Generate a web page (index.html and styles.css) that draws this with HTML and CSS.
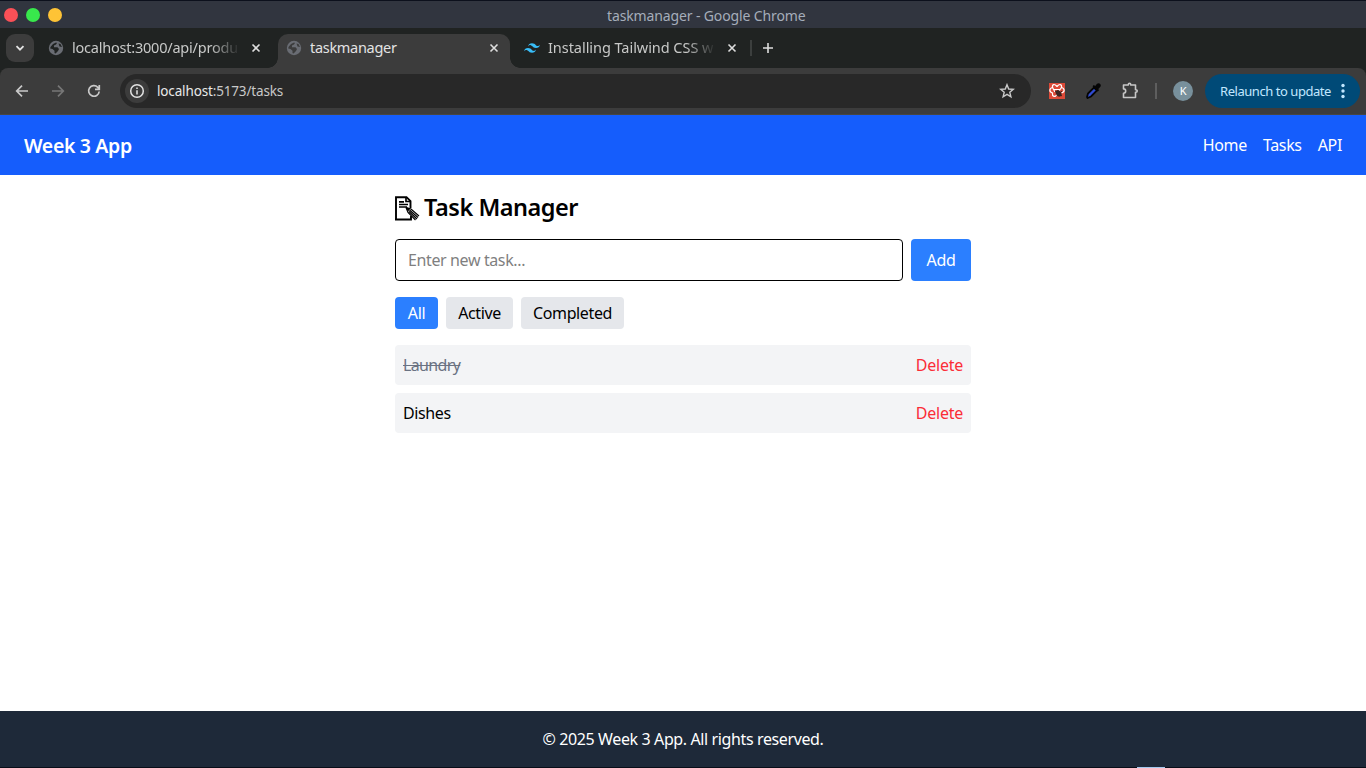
FILE: index.html
```html
<!DOCTYPE html>
<html lang="en">
<head>
<meta charset="utf-8">
<title>taskmanager</title>
<link rel="stylesheet" href="styles.css">
</head>
<body>
<div class="desktop-edge"></div>
<header class="titlebar">
  <div class="lights"><i class="light red"></i><i class="light green"></i><i class="light yellow"></i></div>
  <span class="window-title">taskmanager - Google Chrome</span>
</header>
<div class="tabstrip">
  <div class="tab-search"><svg width="12" height="12" viewBox="0 0 12 12"><path d="M2.500 4.200 6 7.700l3.500-3.500" fill="none" stroke="#e3e3e3" stroke-width="1.800"/></svg></div>
  <div class="tab">
    <svg class="globe" viewBox="0 0 16 16"><circle cx="8" cy="8" r="7.200" fill="#696c73"/><path d="M2.500 7 5 4 8 2.400l1 .6-1 1.500-2 1v1.800h3.500L11 9l-1 2-2.500 2.500-1-.5v-2.300L4.500 9 2.200 8.500zM10.500 3.500l2 .5 1.500 3-2.500-.5z" fill="#202322"/></svg>
    <span class="tab-title faded">localhost:3000/api/produ</span>
    <svg class="close" viewBox="0 0 10 10"><path d="m1.500 1.500 7 7m0-7-7 7"/></svg>
  </div>
  <div class="tab active">
    <svg class="globe" viewBox="0 0 16 16"><circle cx="8" cy="8" r="7.200" fill="#696c73"/><path d="M2.500 7 5 4 8 2.400l1 .6-1 1.500-2 1v1.800h3.500L11 9l-1 2-2.500 2.500-1-.5v-2.300L4.500 9 2.200 8.500zM10.500 3.500l2 .5 1.500 3-2.500-.5z" fill="#3c3c3c"/></svg>
    <span class="tab-title">taskmanager</span>
    <svg class="close" viewBox="0 0 10 10"><path d="m1.500 1.500 7 7m0-7-7 7"/></svg>
  </div>
  <div class="tab">
    <svg class="globe" viewBox="0 0 24 24"><path fill="#38bdf8" d="M12.001 4.800c-3.200 0-5.200 1.600-6 4.800 1.200-1.600 2.600-2.200 4.200-1.800.913.228 1.565.89 2.288 1.624C13.666 10.618 15.027 12 18.001 12c3.200 0 5.200-1.600 6-4.800-1.200 1.600-2.600 2.200-4.200 1.800-.913-.228-1.565-.89-2.288-1.624C16.337 6.182 14.976 4.800 12.001 4.800zm-6 7.200c-3.200 0-5.200 1.600-6 4.800 1.200-1.600 2.600-2.200 4.200-1.800.913.228 1.565.89 2.288 1.624 1.177 1.194 2.538 2.576 5.512 2.576 3.200 0 5.200-1.600 6-4.800-1.200 1.600-2.600 2.200-4.200 1.800-.913-.228-1.565-.89-2.288-1.624C10.337 13.382 8.976 12 6.001 12z"/></svg>
    <span class="tab-title faded installing">Installing Tailwind CSS w</span>
    <svg class="close" viewBox="0 0 10 10"><path d="m1.500 1.500 7 7m0-7-7 7"/></svg>
  </div>
  <i class="tab-divider"></i>
  <svg class="plus" viewBox="0 0 12 12"><path d="M6 1v10M1 6h10" stroke="#dedede" stroke-width="1.600"/></svg>
</div>
<div class="toolbar-back"><div class="toolbar">
  <svg class="nav-icon" viewBox="0 0 16 16"><path d="M14 8H3M8 2.700 2.700 8 8 13.300"/></svg>
  <svg class="nav-icon dim" viewBox="0 0 16 16"><path d="M2 8h11M8 2.700 13.300 8 8 13.300"/></svg>
  <svg class="nav-icon" viewBox="0 0 16 16"><path d="M13.200 8.500A5.300 5.300 0 1 1 11.800 4.300L13.200 6M13.300 2v4.300H9"/></svg>
  <div class="omnibox">
    <span class="site-info"><svg width="16" height="16" viewBox="0 0 16 16" fill="none" stroke="#e3e3e3" stroke-width="1.500"><circle cx="8" cy="8" r="6.300"/><path d="M8 7.200v4.200M8 4.400v1.500"/></svg></span>
    <span class="url"><b>localhost</b>:5173/tasks</span>
    <svg class="star" viewBox="0 0 16 16"><path d="m8 1.700 1.700 4.300 4.600.3-3.500 3 1.100 4.500L8 11.400l-3.900 2.400 1.100-4.500-3.500-3L6.300 6z" fill="none" stroke="#c9c9c9" stroke-width="1.400"/></svg>
  </div>
  <svg class="ext" viewBox="0 0 16 16"><path fill="#dc4a38" d="M0 0h16v16H0z"/><g fill="none" stroke="#fff" stroke-width="1.200"><path d="M8 3.500C5.500.5 3 1 3.500 4.500 0 5.500 0 9 3.500 10c-.5 3.500 2 4.500 4.500 2M8 3.500c2.500-3 5-2.500 4.500 1C16 5.500 16 9 12.500 10"/><path d="M3.500 4.500 6 9M12.500 4.500 10 8M5 6.500h6"/></g><ellipse cx="9.600" cy="10.400" rx="2.500" ry="3.500" fill="#3b2421" transform="rotate(-35 9.600 10.400)"/><path d="m6 8 7 5M7.500 13l5.500-5" stroke="#3b2421"/></svg>
  <svg class="ext dropper" viewBox="0 0 16 16"><path d="m2 14 1-3.500 6-6L12 7.500l-6 6L2.500 15z" fill="#304bd2" stroke="#050505" stroke-width="1.800"/><path d="m7.500 3.200 1.300-1.200 1.400 1L12 .8q2-1.300 3.200.2t0 3L13.300 6l.7 1.200-1.200 1.200z" fill="#050505"/></svg>
  <svg class="puzzle" viewBox="0 0 20 20"><path d="M3.500 4h4.800v-.5a1.200 1.200 0 0 1 2.400 0V4h4.800v4.800h.5a1.200 1.200 0 0 1 0 2.400h-.5v5.300h-12v-4.200a2.200 2.200 0 0 0 0-4.400z" fill="none" stroke="#c7c7c7" stroke-width="1.600" stroke-linejoin="round"/></svg>
  <i class="tool-divider"></i>
  <span class="avatar">K</span>
  <div class="relaunch"><span>Relaunch to update</span><svg width="4" height="16" viewBox="0 0 4 16" fill="#c2e7ff"><circle cx="2" cy="2.500" r="1.700"/><circle cx="2" cy="8" r="1.700"/><circle cx="2" cy="13.500" r="1.700"/></svg></div>
</div></div>
<div class="page">
  <nav class="navbar">
    <div class="brand">Week 3 App</div>
    <div class="links"><a>Home</a><a>Tasks</a><a>API</a></div>
  </nav>
  <main class="content">
    <h1 class="heading"><svg class="memo" viewBox="0 0 25 25"><path d="M1 1h11l3.500 4v19H1z" fill="#fff"/><path d="M1 24V1.200h10.500l4 4V12M0 23.500h16V20" fill="none" stroke="#000" stroke-width="1.900"/><path d="M11 1v4.500h5M4 5.800h5M4 8.500h9M4 11h8" fill="none" stroke="#000" stroke-width="1.700"/><path d="m11 11.500 5 1.500 8 7-1 3-1.500 1-7-5.500z" fill="#fff"/><path d="m11 11.500 5 1.500 8 7M11 11.500l2 5 7.500 7.500M14.500 14l8.500 7.500M14 15.500l8 7.500" fill="none" stroke="#000" stroke-width="1.200"/><path d="m10.500 11 5 1.500-2.500 3z"/></svg><span>Task Manager</span></h1>
    <div class="entry"><div class="field">Enter new task...</div><button class="add">Add</button></div>
    <div class="filters"><button class="filter on">All</button><button class="filter wide">Active</button><button class="filter wider">Completed</button></div>
    <ul class="list">
      <li class="task"><span class="done">Laundry</span><span class="delete">Delete</span></li>
      <li class="task"><span>Dishes</span><span class="delete">Delete</span></li>
    </ul>
  </main>
  <footer class="footer">© 2025 Week 3 App. All rights reserved.</footer>
</div>
<div class="bottom-edge"><i></i></div>
</body>
</html>
```
FILE: styles.css
```css
* { box-sizing: border-box; }
body { margin: 0; width: 1366px; height: 768px; overflow: hidden; display: flex; flex-direction: column; font-family: "Noto Sans", sans-serif; font-size: 16px; line-height: 24px; letter-spacing: -.38px; color: #000; background: #fff; }
svg { flex: none; display: block; }
span, a { white-space: nowrap; }
.desktop-edge { height: 1px; background: #0c101c; flex: none; }
.titlebar { height: 27px; flex: none; background: #31353f; display: grid; grid-template-columns: 607px auto 1fr; align-items: center; color: #a5adba; font-size: 14px; letter-spacing: -.13px; }
.window-title { padding-top: 2px; }
.lights { display: flex; gap: 8px; padding-left: 4px; }
.light { width: 14px; height: 14px; border-radius: 50%; }
.red { background: #fa5057; }
.green { background: #38e84c; }
.yellow { background: #fec336; }
.tabstrip { height: 40px; flex: none; background: #202322; display: flex; align-items: center; padding-left: 6px; }
.tab-search { width: 28px; height: 28px; border-radius: 9px; background: #3c3c3c; display: grid; place-items: center; margin-right: 6px; }
.tab { width: 238px; height: 40px; display: flex; align-items: center; padding: 0 17px 0 8px; color: #c8c9c8; font-size: 14.500px; letter-spacing: -.22px; }
.tab.active { width: 232px; height: 34px; margin-top: 6px; padding: 0 11px 6px 8px; background: #3c3c3c; border-radius: 10px 10px 0 0; color: #e3e3e3; position: relative; letter-spacing: -.3px; }
.tab.active::before, .tab.active::after { content: ""; position: absolute; bottom: 0; width: 10px; height: 10px; }
.tab.active::before { left: -10px; background: radial-gradient(circle at 0 0, transparent 9.500px, #3c3c3c 10px); }
.tab.active::after { right: -10px; background: radial-gradient(circle at 100% 0, transparent 9.500px, #3c3c3c 10px); }
.tab.active + .tab { margin-left: 6px; }
.globe { width: 16px; height: 16px; margin-right: 8px; }
.tab-title { flex: 1; overflow: hidden; margin-right: 11px; padding-bottom: 2px; }
.faded { -webkit-mask-image: linear-gradient(90deg, #000 82%, transparent); mask-image: linear-gradient(90deg, #000 82%, transparent); }
.installing { letter-spacing: -.05px; }
.close { width: 10px; height: 10px; fill: none; stroke: #dedede; stroke-width: 1.600; }
.tab-divider { width: 2px; height: 16px; margin-left: -4px; background: #3c3f3e; }
.plus { width: 12px; height: 12px; margin-left: 10px; }
.toolbar-back { flex: none; background: #202322; }
.toolbar { height: 47px; background: #3c3c3c; display: flex; align-items: center; padding: 0 6px 1px 14px; box-shadow: inset 0 -1px #484640; border-radius: 8px 8px 0 0; }
.nav-icon { width: 16px; height: 16px; margin-right: 20px; fill: none; stroke: #c9c9c9; stroke-width: 1.700; }
.nav-icon.dim { stroke: #777; }
.omnibox { width: 911px; height: 34px; margin-left: -2px; border-radius: 17px; background: #282828; display: flex; align-items: center; padding: 0 16px 0 5px; color: #c9c9c9; font-size: 13.500px; letter-spacing: -.15px; }
.site-info { width: 24px; height: 24px; border-radius: 50%; background: #3c3c3c; display: grid; place-items: center; margin-right: 8px; }
.url { flex: 1; }
.url b { font-weight: 400; color: #e8e8e8; }
.star { width: 16px; height: 16px; }
.ext { width: 16px; height: 16px; margin-left: 18px; }
.dropper { margin-left: 20px; }
.puzzle { width: 20px; height: 20px; margin-left: 19px; }
.tool-divider { width: 2px; height: 16px; margin-left: 15px; background: #5e5e5e; }
.avatar { width: 20px; height: 20px; margin-left: 16px; border-radius: 50%; background: #78909c; color: #fff; font-size: 11px; line-height: 20px; text-align: center; }
.relaunch { width: 155px; height: 34px; margin-left: auto; border-radius: 17px; background: #004a77; color: #c2e7ff; font-size: 13px; letter-spacing: -.45px; display: flex; align-items: center; justify-content: space-between; padding: 0 15px; }
.page { flex: 1; min-height: 0; display: flex; flex-direction: column; }
.navbar { height: 60px; flex: none; background: #155dfc; color: #fff; display: flex; align-items: center; justify-content: space-between; padding: 0 24px; }
.brand { font-size: 19.500px; font-weight: 650; line-height: 28px; letter-spacing: -.35px; padding-top: 2px; }
.links { display: flex; gap: 16px; letter-spacing: -.34px; }
.content { width: 576px; margin: 0 auto; flex: 1; padding-top: 16px; }
.heading { margin: 0 0 16px; height: 32px; font-size: 23.500px; font-weight: 650; line-height: 32px; letter-spacing: -.47px; display: flex; align-items: center; }
.memo { width: 25px; height: 25px; margin: 3px 4px 0 0; }
.entry { display: flex; gap: 8px; height: 42px; margin-bottom: 16px; }
.field { flex: 1; border: 1px solid #000; border-radius: 4px; padding: 8px 12px; color: #7f7f7f; }
button { border: 0; font: inherit; letter-spacing: inherit; border-radius: 4px; padding: 0; }
.add { width: 60px; background: #2b7fff; color: #fff; }
.filters { display: flex; gap: 8px; height: 32px; margin-bottom: 16px; }
.filter { width: 43px; background: #e5e7eb; color: #000; }
.filter.on { background: #2b7fff; color: #fff; }
.filter.wide { width: 67px; }
.filter.wider { width: 103px; }
.list { list-style: none; padding: 0; margin: 0; display: grid; gap: 8px; }
.task { height: 40px; border-radius: 4px; background: #f3f4f6; display: flex; align-items: center; justify-content: space-between; padding: 0 8px; }
.done { color: #6a7282; text-decoration: line-through; letter-spacing: -.65px; }
.delete { color: #fb2c36; letter-spacing: -.25px; }
.footer { height: 56px; flex: none; background: #1e2939; color: #fff; text-align: center; padding: 16px; }
.bottom-edge { height: 1px; flex: none; background: #080d18; padding-left: 1137px; }
.bottom-edge i { display: block; width: 28px; height: 1px; background: #a5c9ee; }
```
